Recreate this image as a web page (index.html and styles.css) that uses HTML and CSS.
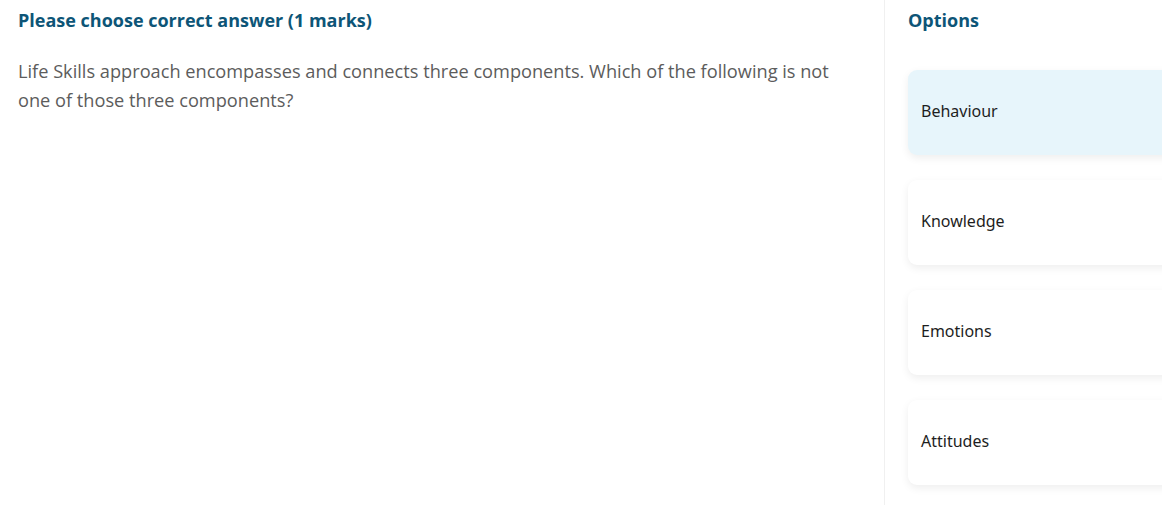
FILE: index.html
```html
<!DOCTYPE html>
<html lang="en">
<head>
    <meta charset="UTF-8">
    <meta name="viewport" content="width=device-width, initial-scale=1.0">
    <title>Question</title>
    <link rel="stylesheet" href="styles.css">
</head>
<body>
    <div class="layout">
        <div class="question">
            <h2 class="heading">Please choose correct answer (1 marks)</h2>
            <p class="question-text">Life Skills approach encompasses and connects three components. Which of the following is not one of those three components?</p>
        </div>
        <div class="options">
            <h2 class="heading">Options</h2>
            <div class="option-list">
                <div class="option selected">Behaviour</div>
                <div class="option">Knowledge</div>
                <div class="option">Emotions</div>
                <div class="option">Attitudes</div>
            </div>
        </div>
    </div>
</body>
</html>
```

FILE: styles.css
```css
body {
    font-family: "Open Sans", Arial, sans-serif;
    margin: 0;
    padding: 0;
    background-color: #fff;
    overflow: hidden;
}
.layout {
    display: flex;
    height: 505px;
}
.question {
    width: 866px;
    flex-shrink: 0;
    padding: 9px 0 0 18px;
    border-right: 1px solid #f0f0f0;
}
.heading {
    margin: 0;
    font-size: 18px;
    line-height: 22px;
    font-weight: 700;
    color: #0d5577;
}
.question-text {
    margin: 26px 0 0;
    width: 830px;
    font-size: 18.2px;
    line-height: 29px;
    color: #5c5c5c;
}
.options {
    padding: 9px 0 0 23px;
    flex-shrink: 0;
}
.option-list {
    display: flex;
    flex-direction: column;
    gap: 25px;
    margin-top: 39px;
}
.option {
    width: 340px;
    height: 85px;
    box-sizing: border-box;
    padding: 0 13px 3px;
    display: flex;
    align-items: center;
    font-family: "Noto Sans", sans-serif;
    font-size: 16px;
    color: #1e1e1e;
    background: #fff;
    border-radius: 9px;
    box-shadow: 0 3px 8px rgba(0, 0, 0, 0.07);
}
.option.selected {
    background: #e7f5fb;
}
```
